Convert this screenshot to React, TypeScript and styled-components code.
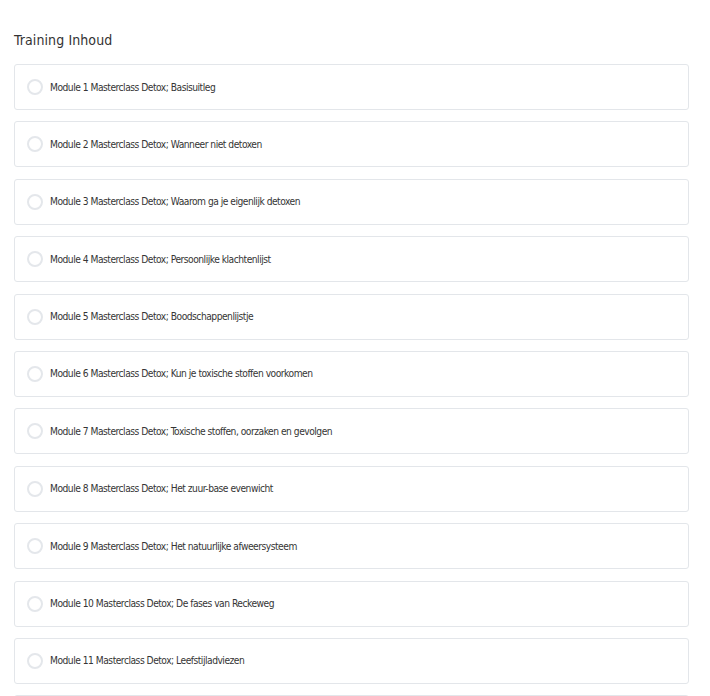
import React from 'react';
import styled, { createGlobalStyle } from 'styled-components';

const GlobalStyle = createGlobalStyle`
  body {
    margin: 0;
    background: #ffffff;
    font-family: "DejaVu Sans Condensed", "DejaVu Sans", sans-serif;
    color: #333333;
  }
`;

const Page = styled.div`
  padding: 30px 21px 0 14px;
`;

const Title = styled.h2`
  margin: 0 0 14px;
  font-size: 14px;
  font-weight: 400;
  letter-spacing: 0.1px;
  line-height: 20px;
  color: #333333;
`;

const List = styled.div`
  display: flex;
  flex-direction: column;
  gap: 11.4px;
`;

const Item = styled.div`
  display: flex;
  align-items: center;
  gap: 7px;
  height: 46px;
  box-sizing: border-box;
  padding: 0 12px;
  border: 1px solid #e3e6ea;
  border-radius: 3px;
  background: #fff;
`;

const Check = styled.span`
  width: 16px;
  height: 16px;
  box-sizing: border-box;
  border: 2px solid #e4e7eb;
  border-radius: 50%;
  flex-shrink: 0;
`;

const Label = styled.span`
  font-size: 10.2px;
  letter-spacing: -0.5px;
  color: #353535;
`;

const modules = [
  'Basisuitleg',
  'Wanneer niet detoxen',
  'Waarom ga je eigenlijk detoxen',
  'Persoonlijke klachtenlijst',
  'Boodschappenlijstje',
  'Kun je toxische stoffen voorkomen',
  'Toxische stoffen, oorzaken en gevolgen',
  'Het zuur-base evenwicht',
  'Het natuurlijke afweersysteem',
  'De fases van Reckeweg',
  'Leefstijladviezen',
  'Afsluiting',
];

const App = () => (
  <>
    <GlobalStyle />
    <Page>
      <Title>Training Inhoud</Title>
      <List>
        {modules.map((name, i) => (
          <Item key={name}>
            <Check />
            <Label>
              Module {i + 1} Masterclass Detox; {name}
            </Label>
          </Item>
        ))}
      </List>
    </Page>
  </>
);

export default App;
